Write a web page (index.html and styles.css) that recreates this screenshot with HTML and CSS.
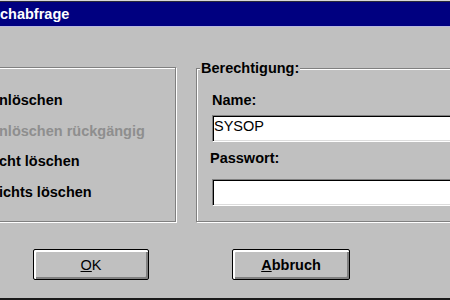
FILE: index.html
```html
<!DOCTYPE html>
<html lang="de">
<head>
<meta charset="utf-8">
<title>Löschabfrage</title>
<link rel="stylesheet" href="styles.css">
</head>
<body>
<div class="window">
  <div class="frame-top"></div>
  <div class="titlebar">chabfrage</div>
  <div class="groups">
    <div class="optbox">
      <div class="opt">nlöschen</div>
      <div class="opt disabled">nlöschen rückgängig</div>
      <div class="opt">cht löschen</div>
      <div class="opt">ichts löschen</div>
    </div>
    <fieldset class="auth">
      <legend>Berechtigung:</legend>
      <label class="lbl lbl-name" for="name">Name:</label>
      <input class="field field-name" id="name" type="text" value="SYSOP">
      <label class="lbl lbl-pass" for="pass">Passwort:</label>
      <input class="field field-pass" id="pass" type="password" value="">
    </fieldset>
  </div>
  <div class="buttons">
    <button class="btn btn-ok"><u>O</u>K</button>
    <button class="btn btn-cancel"><u>A</u>bbruch</button>
  </div>
</div>
</body>
</html>
```
FILE: styles.css
```css
html, body {
  margin: 0;
  padding: 0;
  overflow: hidden;
  background: #c0c0c0;
}
body {
  width: 450px;
  height: 300px;
  font-family: "Liberation Sans", Arial, sans-serif;
  font-size: 14.5px;
  color: #000;
}
.window {
  box-sizing: border-box;
  height: 300px;
  background: #c0c0c0;
  border-bottom: 2px solid #1a1a1a;
}
.frame-top {
  height: 1px;
  background: #d8d8d8;
}
.titlebar {
  height: 24px;
  border-top: 1px solid #2a2a3a;
  border-bottom: 1px solid #b8b8e0;
  background: #000080;
  color: #fff;
  font-weight: bold;
  line-height: 24px;
  padding-left: 0;
  white-space: nowrap;
}
.groups {
  display: flex;
  align-items: flex-start;
  margin-top: 33px;
  gap: 20px;
}
.optbox {
  box-sizing: border-box;
  flex: none;
  margin-left: -20px;
  margin-top: 7px;
  width: 196px;
  height: 155px;
  border: 1px solid #808080;
  box-shadow: 1px 1px 0 #fff, inset 1px 1px 0 #fff;
  padding: 17px 0 0 18px;
}
.opt {
  font-weight: bold;
  line-height: 30.67px;
  white-space: nowrap;
}
.opt.disabled {
  color: #8e8e8e;
}
.auth {
  flex: none;
  width: 300px;
  margin: 0;
  padding: 0 0 15px 0;
  border: 1px solid #808080;
  box-shadow: 1px 1px 0 #fff, inset 1px 1px 0 #fff;
  min-width: 0;
}
.auth legend {
  margin-left: 3px;
  padding: 0 1px;
  font-weight: bold;
  line-height: 16px;
  background: #c0c0c0;
}
.lbl {
  display: block;
  font-weight: bold;
  line-height: 16px;
}
.lbl-name {
  margin: 16px 0 0 15px;
}
.lbl-pass {
  margin: 8px 0 0 13px;
}
.field {
  display: block;
  box-sizing: border-box;
  width: 280px;
  height: 27px;
  margin-left: 15px;
  padding: 0 0 6px 1px;
  border: 1px solid;
  border-color: #808080 #fff #fff #808080;
  box-shadow: inset 1px 1px 0 #000, inset -1px -1px 0 #dcdcdc;
  background: #fff;
  font-family: "Liberation Sans", Arial, sans-serif;
  font-size: 14.5px;
  color: #000;
  outline: none;
}
.field-name {
  margin-top: 7px;
}
.field-pass {
  margin-top: 13px;
}
.buttons {
  display: flex;
  gap: 83px;
  padding-left: 33px;
  margin-top: 27px;
}
.btn {
  box-sizing: border-box;
  height: 31px;
  padding: 0;
  border: 1px solid #000;
  border-radius: 2px;
  background: #c0c0c0;
  box-shadow: inset 2px 2px 0 #fff, inset -2px -2px 0 #808080;
  font-family: "Liberation Sans", Arial, sans-serif;
  font-size: 14.5px;
  color: #000;
  line-height: 16px;
}
.btn-ok {
  width: 116px;
  font-weight: normal;
}
.btn-cancel {
  width: 118px;
  font-weight: bold;
}
```
